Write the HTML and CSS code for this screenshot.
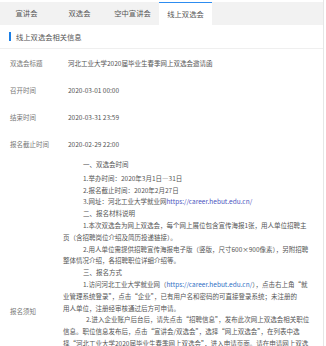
FILE: index.html
```html
<!DOCTYPE html>
<html lang="zh-CN">
<head>
  <meta charset="UTF-8">
  <meta name="viewport" content="width=device-width, initial-scale=1.0">
  <title>线上双选会</title>
  <link rel="stylesheet" href="styles.css">
</head>
<body>
  <div class="panel">
    <div class="tabs">
      <div class="tab">宣讲会</div>
      <div class="tab">双选会</div>
      <div class="tab">空中宣讲会</div>
      <div class="tab active">线上双选会</div>
    </div>
    <div class="section-title"><span class="bar"></span>线上双选会相关信息</div>
    <div class="info">
      <div class="label">双选会标题</div>
      <div class="value">河北工业大学2020届毕业生春季网上双选会邀请函</div>

      <div class="label">召开时间</div>
      <div class="value">2020-03-01 00:00</div>

      <div class="label">结束时间</div>
      <div class="value">2020-03-31 23:59</div>

      <div class="label">报名截止时间</div>
      <div class="value">2020-02-29 22:00</div>

      <div class="label mid">报名须知</div>
      <div class="notice">
        <p class="first">一、双选会时间</p>
        <p>1.举办时间：2020年3月1日—31日</p>
        <p>2.报名截止时间：2020年2月27日</p>
        <p>3.网址：河北工业大学就业网<a class="link" href="#">https://career.hebut.edu.cn/</a></p>
        <p>二、报名材料说明</p>
        <p>1.本次双选会为网上双选会，每个网上展位包含宣传海报1张，用人单位招聘主页（含招聘岗位介绍及简历投递链接）。</p>
        <p>2.用人单位需提供招聘宣传海报电子版（竖版，尺寸600×900像素），另附招聘整体情况介绍，各招聘职位详细介绍等。</p>
        <p>三、报名方式</p>
        <p>1.访问河北工业大学就业网（<a class="link2" href="#">https://career.hebut.edu.cn/</a>），点击右上角“就业管理系统登录”，点击“企业”，已有用户名和密码的可直接登录系统；未注册的<br>用人单位，注册经审核通过后方可申请。</p>
        <p class="more">2.进入企业账户后台后，请先点击“招聘信息”，发布此次网上双选会相关职位信息。职位信息发布后，点击“宣讲会/双选会”，选择“网上双选会”，在列表中选<br>择“河北工业大学2020届毕业生春季网上双选会”，进入申请页面。请在申请网上双选会时上传宣传海报及单位介绍等材料，提交后等待学校审核。</p>
        <p>四、注意事项</p>
        <p>1.请用人单位在报名截止时间前完成申请，逾期不再受理。</p>
        <p>2.审核通过的单位信息将在河北工业大学就业网“网上双选会”栏目统一展示。</p>
        <p>3.请用人单位认真核对所填写的招聘信息，确保信息真实有效。</p>
        <p>4.双选会期间，请及时处理毕业生投递的简历，并通过网络开展面试等工作。</p>
        <p>5.如有疑问，请与学校就业指导中心联系。</p>
        <p>五、联系方式</p>
        <p>河北工业大学学生就业指导中心</p>
      </div>
    </div>
  </div>
</body>
</html>
```

FILE: styles.css
```css
body {
  margin: 0;
  background: #fff;
  font-family: "Noto Sans CJK SC", "Liberation Sans", sans-serif;
  color: #555;
  overflow: hidden;
}
.panel {
  width: 323px;
  border-right: 1px solid #e6e6e6;
  padding-top: 2px;
}
.tabs {
  display: flex;
  height: 23px;
  background: #f2f2f2;
}
.tab {
  width: 53px;
  box-sizing: border-box;
  font-size: 7.3px;
  line-height: 23px;
  text-align: center;
  color: #555;
}
.tab.active {
  background: #fff;
  border-top: 1px solid #2d8cf0;
  line-height: 22px;
}
.section-title {
  display: flex;
  align-items: center;
  height: 23px;
  padding-left: 9px;
  font-size: 7.3px;
  color: #555;
  border-bottom: 1px solid #efefef;
}
.bar {
  width: 2px;
  height: 9px;
  background: #1b7fe6;
  margin-right: 5px;
}
.info {
  display: grid;
  grid-template-columns: 53px 1fr;
  font-size: 6.5px;
  padding-top: 1px;
}
.label {
  padding-left: 10px;
  height: 27px;
  line-height: 27px;
  color: #777;
  white-space: nowrap;
}
.label.mid {
  height: auto;
  align-self: center;
}
.value {
  padding-left: 15px;
  height: 27px;
  line-height: 27px;
  color: #555;
}
.notice {
  padding: 1px 12px 10px 10px;
  line-height: 11.8px;
  color: #555;
}
.notice p {
  margin: 0;
  text-indent: 20px;
}
.notice p.first {
  margin-bottom: 2px;
}
.notice p.more {
  text-indent: 23px;
}
.link {
  color: #4a55c0;
  text-decoration: none;
}
.link2 {
  color: #2f6fc5;
  text-decoration: none;
}
```
